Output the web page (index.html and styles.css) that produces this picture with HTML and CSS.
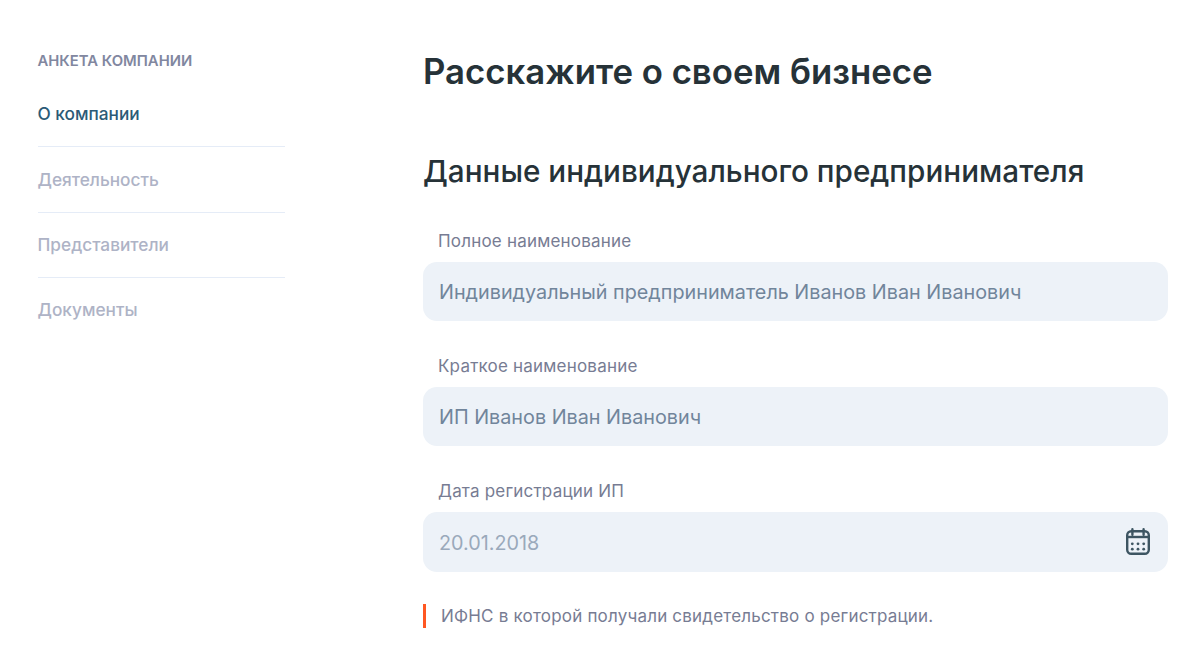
FILE: index.html
```html
<!DOCTYPE html>
<html lang="ru">
<head>
    <meta charset="UTF-8">
    <title>Анкета компании</title>
    <link rel="stylesheet" href="styles.css">
</head>
<body>
    <div class="page">
        <aside class="sidebar">
            <div class="sidebar-title">АНКЕТА КОМПАНИИ</div>
            <nav class="steps">
                <a class="step active">О компании</a>
                <a class="step">Деятельность</a>
                <a class="step">Представители</a>
                <a class="step">Документы</a>
            </nav>
        </aside>
        <main class="content">
            <h1>Расскажите о своем бизнесе</h1>
            <h2>Данные индивидуального предпринимателя</h2>
            <div class="field">
                <label>Полное наименование</label>
                <div class="input"><span>Индивидуальный предприниматель Иванов Иван Иванович</span></div>
            </div>
            <div class="field">
                <label>Краткое наименование</label>
                <div class="input"><span>ИП Иванов Иван Иванович</span></div>
            </div>
            <div class="field">
                <label>Дата регистрации ИП</label>
                <div class="input date">
                    <span>20.01.2018</span>
                    <svg class="calendar" width="26" height="28" viewBox="0 0 26 28" fill="none">
                        <rect x="2.2" y="3.2" width="21.6" height="22.6" rx="4" stroke="#3d5562" stroke-width="2.4"/>
                        <path d="M2.2 9h21.6" stroke="#3d5562" stroke-width="2.4"/>
                        <path d="M7.4 1.2v5.5M18.6 1.2v5.5" stroke="#3d5562" stroke-width="2.4" stroke-linecap="round"/>
                        <g fill="#3d5562">
                            <circle cx="7.3" cy="15.8" r="1.4"/><circle cx="13" cy="15.8" r="1.4"/><circle cx="18.7" cy="15.8" r="1.4"/>
                            <circle cx="7.3" cy="21.2" r="1.4"/><circle cx="13" cy="21.2" r="1.4"/><circle cx="18.7" cy="21.2" r="1.4"/>
                        </g>
                    </svg>
                </div>
            </div>
            <p class="note">ИФНС в которой получали свидетельство о регистрации.</p>
        </main>
    </div>
</body>
</html>
```

FILE: styles.css
```css
body {
    margin: 0; background-color: #fff; overflow: hidden;
    font-family: Inter, "Noto Sans", sans-serif;
}
.page { display: flex; padding: 0 32px 0 38px; }
.sidebar { width: 247px; flex-shrink: 0; margin-right: 138px; padding-top: 52px; }
.sidebar-title { font-size: 14.85px; line-height: 18px; font-weight: 600; color: #8187a0; margin-left: -0.5px; }
.steps { display: flex; flex-direction: column; margin-top: 20px; }
.step {
    font-size: 17.25px; line-height: 24px; font-weight: 500; color: #aeb3c6;
    padding: 20.3px 0 20px; border-bottom: 1px solid #e5ecf7; text-indent: -0.5px;
}
.step:first-child { padding: 12px 0 20.4px; color: #2b5a77; }
.step:last-child { border-bottom: none; }
.content { flex: 1; padding-top: 48px; }
h1 { margin: 0; font-size: 34.75px; line-height: 46px; font-weight: 600; color: #263238; }
h2 { margin: 57px 0 0; font-size: 29.7px; line-height: 40px; font-weight: 500; color: #263238; }
.field { margin-top: 39.8px; }
.field + .field { margin-top: 35px; }
label { display: block; font-size: 17px; letter-spacing: 0.2px; line-height: 20px; color: #777c93; padding: 0 0 11px 15px; }
.input {
    display: flex; align-items: center; justify-content: space-between;
    height: 59.3px; box-sizing: border-box; padding: 0 17px 0 16px;
    background-color: #edf2f8; border-radius: 14px;
    font-size: 19.8px; color: #71859b;
}
.input span { padding-top: 1px; }
.date { color: #9aa9bb; }
.note {
    margin: 32.3px 0 0; padding-left: 15px; border-left: 3px solid #ff5722;
    font-size: 17px; letter-spacing: 0.2px; line-height: 24px; color: #777c93;
}
```
